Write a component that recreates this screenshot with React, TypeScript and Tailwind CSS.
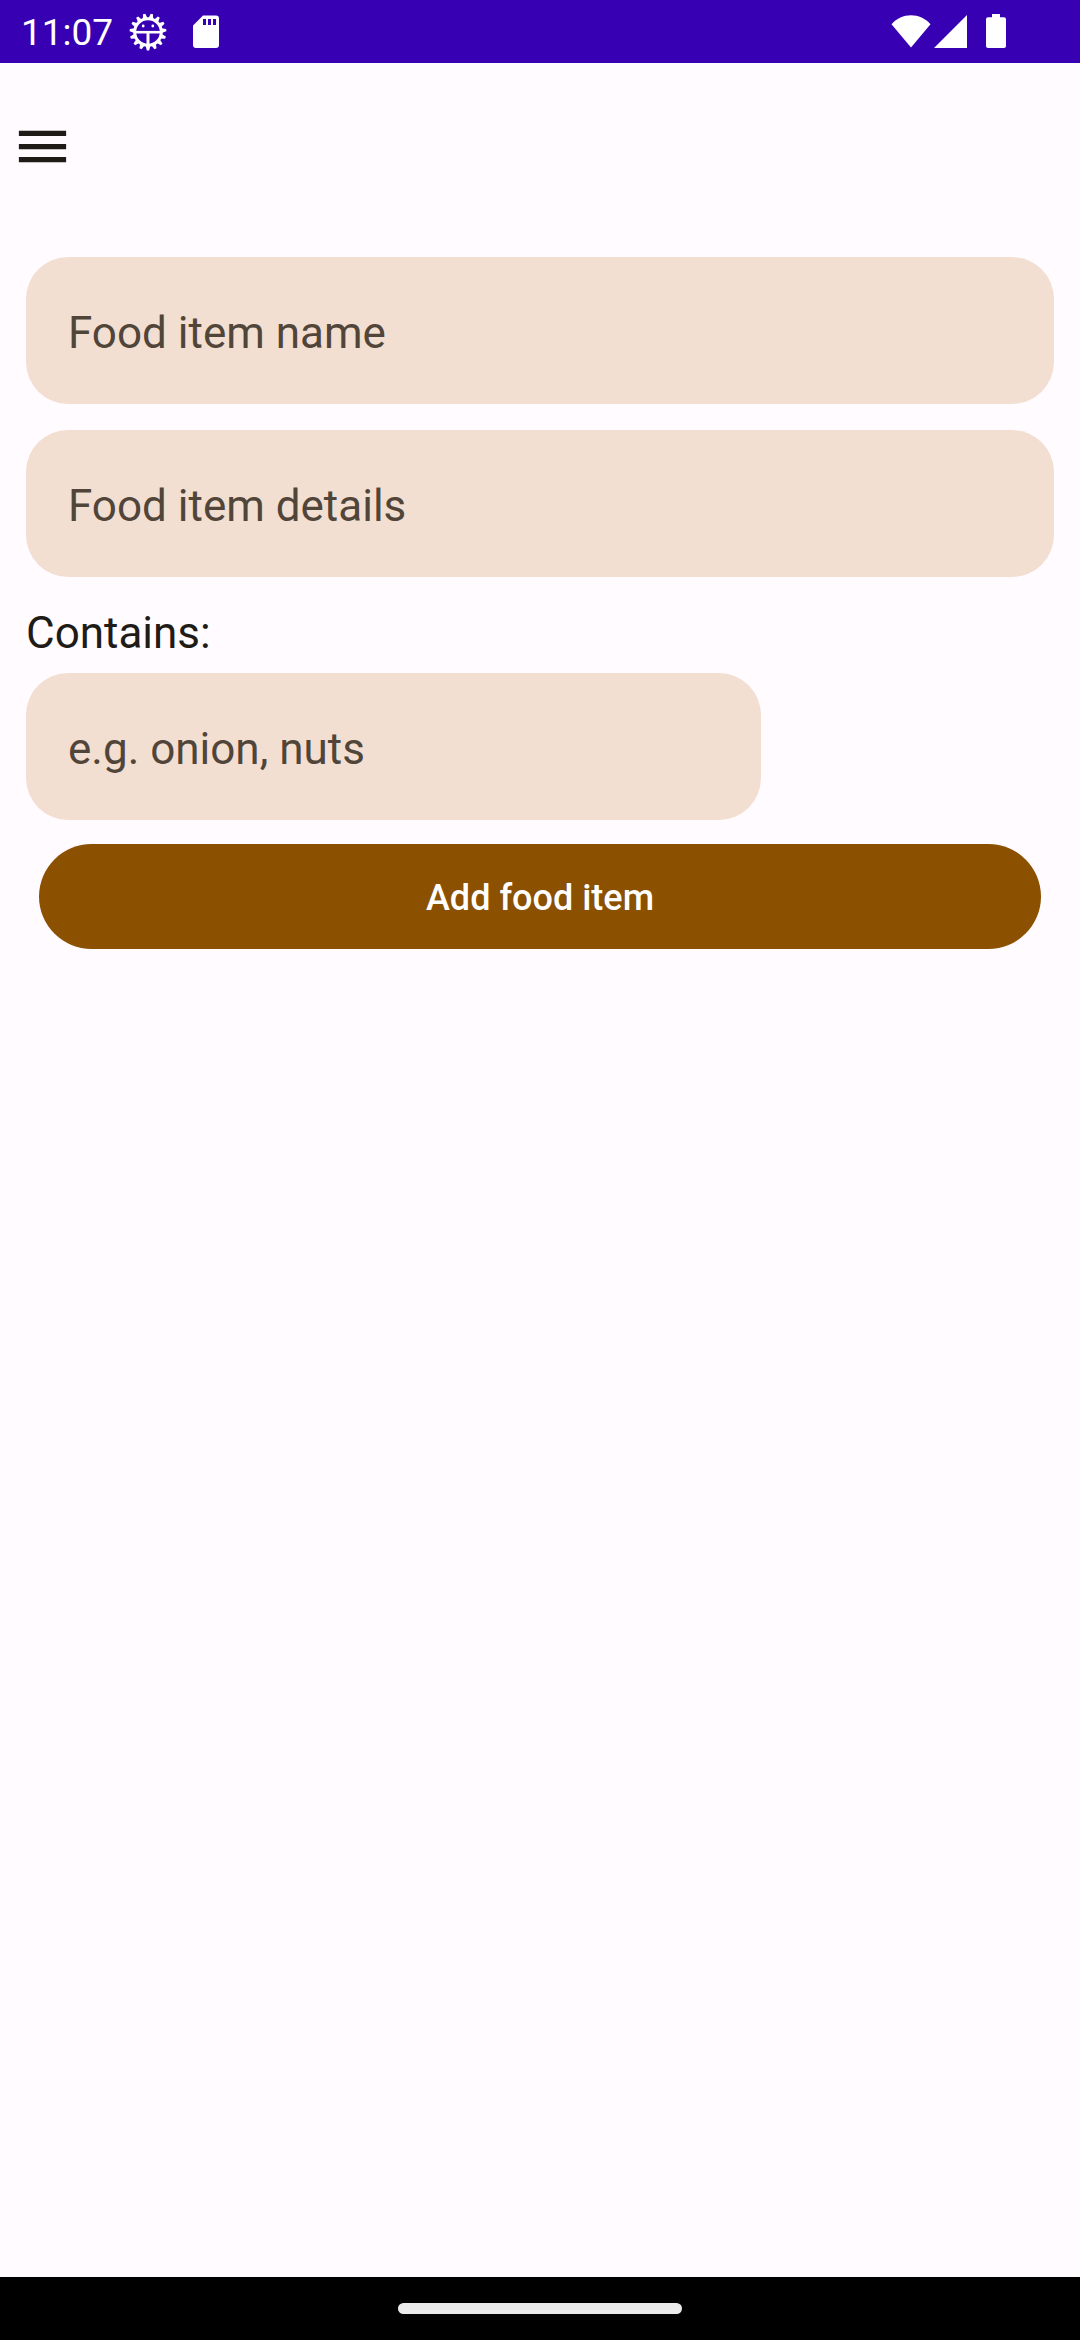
const TEETH = Array.from({ length: 15 }, (_, i) => i * 24 + 12);

function DebugIcon() {
  return (
    <svg className="size-10" viewBox="0 0 40 40" fill="none" aria-hidden="true">
      {TEETH.map((angle) => (
        <path key={angle} d="M17.6 6.5 18.8 1.6h2.4L22.4 6.5z" fill="#fff" transform={`rotate(${angle} 20 20)`} />
      ))}
      <circle cx="20" cy="20" r="13.3" stroke="#fff" strokeWidth="3" />
      <path d="M8 20.2h24" stroke="#fff" strokeWidth="2.6" />
      <path d="M20 20v13" stroke="#fff" strokeWidth="3" />
      <circle cx="15.2" cy="14" r="1.4" fill="#fff" />
      <circle cx="24.8" cy="14" r="1.4" fill="#fff" />
    </svg>
  );
}

function SdCardIcon() {
  return (
    <svg className="h-[34px] w-[26px]" viewBox="0 0 26 34" aria-hidden="true">
      <path
        fill="#fff"
        fillRule="evenodd"
        d="M10 0.5h13a3 3 0 0 1 3 3V30a3 3 0 0 1-3 3H3a3 3 0 0 1-3-3V10.5zM10 4v6h3V4zM15 4v6h3V4zM20 4v6h3V4z"
      />
    </svg>
  );
}

function WifiIcon() {
  return (
    <svg className="h-[33px] w-10" viewBox="0 0 40 33" aria-hidden="true">
      <path fill="#fff" d="M20 32.6 0.5 9.2C6 3 12.5 0.2 20 0.2S34 3 39.5 9.2z" />
    </svg>
  );
}

function SignalIcon() {
  return (
    <svg className="size-[33px]" viewBox="0 0 33 33" aria-hidden="true">
      <path fill="#fff" d="M33 0v33H0z" />
    </svg>
  );
}

function BatteryIcon() {
  return (
    <svg className="h-[34px] w-5" viewBox="0 0 20 34" aria-hidden="true">
      <path
        fill="#fff"
        d="M6 0h8v3.3h4a2 2 0 0 1 2 2V32a2 2 0 0 1-2 2H2a2 2 0 0 1-2-2V5.3a2 2 0 0 1 2-2h4z"
      />
    </svg>
  );
}

const fieldClass =
  "h-[147px] max-w-full rounded-[42px] bg-[#f2dfd1] px-[42px] pt-1 text-[44px] outline-none placeholder:text-[#51453a] placeholder:opacity-100";

export default function App() {
  return (
    <div className="flex min-h-screen flex-col bg-[#fffbff] font-[Roboto,sans-serif] text-[#1f1b16]">
      <div className="flex h-[63px] items-center justify-between bg-[#3700b3] pr-[74px] pl-[21px] text-white">
        <div className="flex items-center">
          <span className="w-[107px] pt-0.5 text-[37px] leading-none">11:07</span>
          <DebugIcon />
          <div className="pl-[25px]">
            <SdCardIcon />
          </div>
        </div>
        <div className="flex items-center pb-px">
          <WifiIcon />
          <div className="pr-[19px] pl-[3px]">
            <SignalIcon />
          </div>
          <BatteryIcon />
        </div>
      </div>

      <header className="flex h-[168px] items-center px-[11px] pb-0.5">
        <button type="button" aria-label="Open menu">
          <svg className="size-[63px]" viewBox="0 0 24 24" aria-hidden="true">
            <path fill="#1f1b16" d="M3 18h18v-2H3zm0-5h18v-2H3zm0-7v2h18V6z" />
          </svg>
        </button>
      </header>

      <form className="flex flex-col px-[26px] pt-[26px]" onSubmit={(e) => e.preventDefault()}>
        <div className="flex flex-col gap-[26px]">
          <input type="text" aria-label="Food item name" placeholder="Food item name" className={fieldClass} />
          <input type="text" aria-label="Food item details" placeholder="Food item details" className={fieldClass} />
        </div>
        <label htmlFor="contains" className="pt-6 text-[44px] leading-[64px]">
          Contains:
        </label>
        <div className="mt-2 flex">
          <input id="contains" type="text" placeholder="e.g. onion, nuts" className={`w-[735px] ${fieldClass}`} />
        </div>
        <button
          type="submit"
          className="mx-[13px] mt-6 h-[105px] rounded-full bg-[#8b5000] pt-0.5 text-[36px] font-medium text-white"
        >
          Add food item
        </button>
      </form>

      <div className="mt-auto flex h-[63px] items-center justify-center bg-black">
        <div className="h-[11px] w-[284px] rounded-full bg-[#ebebeb]" />
      </div>
    </div>
  );
}
